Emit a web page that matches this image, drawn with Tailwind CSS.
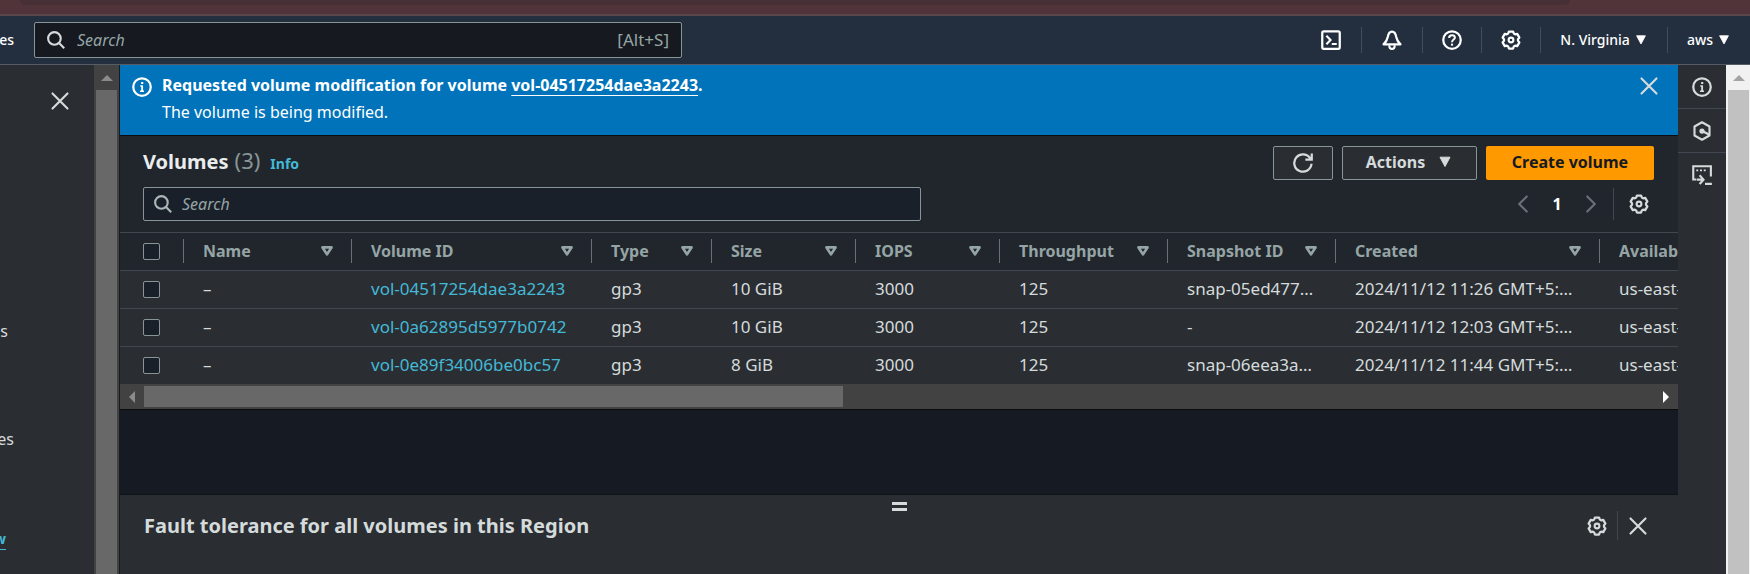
<!DOCTYPE html>
<html lang="en">
<head>
<meta charset="utf-8">
<title>Volumes | EC2</title>
<script src="https://cdn.jsdelivr.net/npm/@tailwindcss/browser@4"></script>
</head>
<body class="bg-[#161a22] text-[#d5dbdb] font-['Noto_Sans','Open_Sans',sans-serif] text-[16px] leading-6">
<svg class="hidden" aria-hidden="true">
  <defs>
    <symbol id="search" viewBox="0 0 16 16"><g fill="none" stroke="currentColor" stroke-width="1.9"><circle cx="6.6" cy="6.6" r="5.6"/><path d="M10.5 10.5 15.3 15.3"/></g></symbol>
    <symbol id="close" viewBox="0 0 16 16"><path d="M2 2l12 12M14 2L2 14" fill="none" stroke="currentColor" stroke-width="1.7" stroke-linecap="round"/></symbol>
    <symbol id="info" viewBox="0 0 16 16"><g fill="none" stroke="currentColor"><circle cx="8" cy="8" r="7" stroke-width="1.8"/><path d="M6.6 7.2H8V11M6.4 11.4h3.2M8.2 7v4.4" stroke-width="1.3"/><path d="M7.3 4.8h1.7" stroke-width="1.6"/></g></symbol>
    <symbol id="gear" viewBox="0 0 16 16"><g fill="none" stroke="currentColor" stroke-linejoin="round"><path stroke-width="1.8" d="M9.7 1.2 10.3 2.9 11.3 3.5 13 3.1 14.7 6.1 13.6 7.4V8.6L14.7 9.9 13 12.9 11.3 12.5 10.3 13.1 9.7 14.8H6.3L5.7 13.1 4.7 12.5 3 12.9 1.3 9.9 2.4 8.6V7.4L1.3 6.1 3 3.1 4.7 3.5 5.7 2.9 6.3 1.2Z"/><circle cx="8" cy="8" r="1.9" stroke-width="1.7"/></g></symbol>
    <symbol id="caret" viewBox="0 0 16 16"><path d="M3 3.2h10L8 12.5Z" fill="currentColor" stroke="currentColor" stroke-width="1" stroke-linejoin="round"/></symbol>
    <symbol id="filter" viewBox="0 0 16 16"><path d="M4 4.8h8L8 11Z" fill="none" stroke="currentColor" stroke-width="2.4" stroke-linejoin="round"/></symbol>
    <symbol id="terminal" viewBox="0 0 16 16"><g fill="none" stroke="currentColor" stroke-width="1.8"><rect x="1" y="1" width="14" height="14" rx="1.2"/><path d="M4.3 4.6 7.6 8 4.3 11.4M8.6 11.2H12.6" stroke-width="1.7"/></g></symbol>
    <symbol id="bell" viewBox="0 0 16 16"><path d="M1.2 11.4C3 9.9 4.1 8.2 4.6 5.6 5 3.2 6 1.2 8 1.2S11 3.2 11.4 5.6C11.9 8.2 13 9.9 14.8 11.4Z" fill="none" stroke="currentColor" stroke-width="1.8" stroke-linejoin="round"/><path d="M5.9 12.2V13a2.1 2.1 0 0 0 4.2 0V12.2" fill="none" stroke="currentColor" stroke-width="1.7"/></symbol>
    <symbol id="help" viewBox="0 0 16 16"><g fill="none" stroke="currentColor"><circle cx="8" cy="8" r="7" stroke-width="1.8"/><path d="M5.7 6.3C5.7 4.9 6.7 4.2 8 4.2S10.3 5 10.3 6.1C10.3 7.6 8 7.7 8 9.7" stroke-width="1.6"/><path d="M8 10.9v1.6" stroke-width="1.7"/></g></symbol>
    <symbol id="hex" viewBox="0 0 16 16"><path d="M8 1 14 4.4V11.6L8 15 2 11.6V4.4Z" fill="none" stroke="currentColor" stroke-width="1.7" stroke-linejoin="round"/><circle cx="8" cy="8" r="2.1" fill="currentColor"/><path d="M8.5 8.2 14 11" stroke="currentColor" stroke-width="1.8"/></symbol>
    <symbol id="shell" viewBox="0 0 16 16"><g fill="none" stroke="currentColor" stroke-width="1.7"><path d="M3.4 11.6H1V1H15.1V9.2"/><path d="M3.4 4.3H5M6.4 4.3H8M9.4 4.3H11" stroke-width="1.5"/><path d="M3.8 11.7H9M6.1 8.2 9.2 11.7 6.1 15.2M10.4 15.1H15.9"/></g></symbol>
    <symbol id="refresh" viewBox="0 0 16 16"><path d="M14.8 8.6A6.9 6.9 0 1 1 13.9 4.6M15 .4V5.3H9.9" fill="none" stroke="currentColor" stroke-width="1.8"/></symbol>
    <symbol id="left" viewBox="0 0 16 16"><path d="M11 2 5 8l6 6" fill="none" stroke="currentColor" stroke-width="1.7" stroke-linecap="round"/></symbol>
    <symbol id="right" viewBox="0 0 16 16"><path d="M5 2l6 6-6 6" fill="none" stroke="currentColor" stroke-width="1.7" stroke-linecap="round"/></symbol>
  </defs>
</svg>

<div class="flex min-h-screen flex-col overflow-hidden">
  <div class="h-4 border-b-2 border-[#5a474b] bg-[#50343a] pl-5 pr-[180px]" aria-hidden="true">
    <div class="h-[5px] rounded-b-[12px] bg-[#463036]"></div>
  </div>

  <header class="flex items-center justify-between border-b border-[#555c66] bg-[#232f3e] py-[6px] text-[14px] leading-5 font-medium text-white">
    <div class="flex items-center gap-5">
      <a href="#" class="flex w-[14px] justify-end">es</a>
      <label class="flex h-9 w-[648px] items-center gap-3 rounded-[2px] border border-[#879596] bg-[#161920] px-3 text-[16px] font-normal text-[#95a5a6]">
        <svg class="size-[18px] shrink-0 text-[#d5dbdb]"><use href="#search"/></svg>
        <input type="search" aria-label="Search services" placeholder="Search" class="min-w-0 flex-1 bg-transparent outline-none placeholder:text-[#95a5a6] placeholder:italic">
        <span class="text-[17px]">[Alt+S]</span>
      </label>
    </div>
    <nav class="flex items-center divide-x divide-[#414d5c]">
      <button aria-label="CloudShell" class="flex h-[26px] items-center px-5"><svg class="size-5"><use href="#terminal"/></svg></button>
      <button aria-label="Notifications" class="flex h-[26px] items-center px-5"><svg class="size-5"><use href="#bell"/></svg></button>
      <button aria-label="Help" class="flex h-[26px] items-center px-[19px]"><svg class="size-5"><use href="#help"/></svg></button>
      <button aria-label="Settings" class="flex h-[26px] items-center px-[19px]"><svg class="size-5"><use href="#gear"/></svg></button>
      <button class="flex h-[26px] items-center gap-1 px-[19px]">N. Virginia <svg class="size-[14px]"><use href="#caret"/></svg></button>
      <button class="flex h-[26px] items-center gap-1 px-[19px]">aws <svg class="size-[14px]"><use href="#caret"/></svg></button>
    </nav>
  </header>

  <div class="flex flex-1">
    <aside class="flex w-[94px] shrink-0 flex-col bg-[#2a2e33]">
      <button aria-label="Close navigation" class="mt-[26px] ml-[50px] w-5"><svg class="size-5"><use href="#close"/></svg></button>
      <a href="#" class="mt-[208px] flex w-2 justify-end">s</a>
      <a href="#" class="mt-[84px] flex w-[14px] justify-end">es</a>
      <a href="#" class="mt-[78px] flex w-[6px] justify-end border-b border-dashed border-[#44b9d6] text-[14px] leading-5 font-bold text-[#44b9d6]">w</a>
    </aside>
    <div class="flex w-[25px] shrink-0 flex-col bg-[#424242] px-[2px]" aria-hidden="true">
      <div class="flex h-[25px] items-center justify-center"><svg class="h-[6px] w-3" viewBox="0 0 12 6"><path d="M6 0 12 6H0Z" fill="#8b8b8b"/></svg></div>
      <div class="flex-1 bg-[#686868]"></div>
    </div>

    <main class="flex min-w-0 flex-1 flex-col border-l border-[#16191f]">
      <section class="flex items-start gap-[10px] bg-[#0073bb] px-3 pt-[7px] pb-[9px] text-white">
        <svg class="mt-[5px] size-5 shrink-0"><use href="#info"/></svg>
        <div class="flex-1 leading-[27px]">
          <p class="font-bold">Requested volume modification for volume <a href="#" class="underline underline-offset-4">vol-04517254dae3a2243</a>.</p>
          <p>The volume is being modified.</p>
        </div>
        <button aria-label="Dismiss" class="mt-1 mr-[7px] text-[#d5dbdb]"><svg class="size-5"><use href="#close"/></svg></button>
      </section>

      <section class="border-y border-y-[#0b0d10] bg-[#21252c]">
        <div class="pt-[10px] pr-6 pb-[11px] pl-[23px]">
          <div class="flex items-center justify-between">
            <h1 class="flex items-baseline gap-[6px] pb-[2px] text-[20px] leading-7 font-bold text-[#eaeded]">Volumes <span class="text-[22px] font-normal text-[#879596]">(3)</span> <a href="#" class="ml-1 text-[14px] text-[#44b9d6]">Info</a></h1>
            <div class="flex gap-[9px] font-bold">
              <button aria-label="Refresh" class="flex h-[34px] w-[60px] items-center justify-center rounded-[2px] border border-[#879596] bg-[#2a2e33]"><svg class="size-5"><use href="#refresh"/></svg></button>
              <button class="flex h-[34px] w-[135px] items-center justify-center gap-3 rounded-[2px] border border-[#879596] bg-[#2a2e33] pb-[2px]">Actions <svg class="size-4"><use href="#caret"/></svg></button>
              <button class="h-[34px] w-[168px] rounded-[2px] bg-[#ff9900] pb-[2px] text-[#16191f]">Create volume</button>
            </div>
          </div>
          <div class="mt-[7px] flex items-center justify-between">
            <label class="flex h-[34px] w-[778px] items-center gap-[10px] rounded-[2px] border border-[#879596] bg-[#1a2029] px-[10px]">
              <svg class="size-[18px] shrink-0 text-[#aab7b8]"><use href="#search"/></svg>
              <input type="search" aria-label="Search volumes" placeholder="Search" class="min-w-0 flex-1 bg-transparent outline-none placeholder:text-[#95a5a6] placeholder:italic">
            </label>
            <div class="flex items-center">
              <button aria-label="Previous page" class="text-[#687078]"><svg class="size-5"><use href="#left"/></svg></button>
              <button class="w-12 font-bold text-white">1</button>
              <button aria-label="Next page" class="text-[#687078]"><svg class="size-5"><use href="#right"/></svg></button>
              <span class="ml-3 h-8 border-l border-[#414750]"></span>
              <button aria-label="Preferences" class="mr-[5px] ml-[15px]"><svg class="size-5"><use href="#gear"/></svg></button>
            </div>
          </div>
        </div>

        <div class="overflow-hidden border-t border-[#414750]">
          <table class="w-[1680px] table-fixed border-collapse text-left whitespace-nowrap">
            <colgroup><col class="w-[63px]"><col class="w-[168px]"><col class="w-[240px]"><col class="w-[120px]"><col class="w-[144px]"><col class="w-[144px]"><col class="w-[168px]"><col class="w-[168px]"><col class="w-[264px]"><col></colgroup>
            <thead class="text-[#95a5a6]">
              <tr class="h-[37px] border-b border-[#414750]">
                <th class="pl-[23px]"><input type="checkbox" aria-label="Select all" class="block size-[17px] appearance-none rounded-[2px] border border-[#879596] bg-[#1a2029]"></th>
                <th><div class="flex h-6 items-center justify-between border-l border-[#687078] pr-[15px] pl-[19px]">Name<svg class="size-[18px]"><use href="#filter"/></svg></div></th>
                <th><div class="flex h-6 items-center justify-between border-l border-[#687078] pr-[15px] pl-[19px]">Volume ID<svg class="size-[18px]"><use href="#filter"/></svg></div></th>
                <th><div class="flex h-6 items-center justify-between border-l border-[#687078] pr-[15px] pl-[19px]">Type<svg class="size-[18px]"><use href="#filter"/></svg></div></th>
                <th><div class="flex h-6 items-center justify-between border-l border-[#687078] pr-[15px] pl-[19px]">Size<svg class="size-[18px]"><use href="#filter"/></svg></div></th>
                <th><div class="flex h-6 items-center justify-between border-l border-[#687078] pr-[15px] pl-[19px]">IOPS<svg class="size-[18px]"><use href="#filter"/></svg></div></th>
                <th><div class="flex h-6 items-center justify-between border-l border-[#687078] pr-[15px] pl-[19px]">Throughput<svg class="size-[18px]"><use href="#filter"/></svg></div></th>
                <th><div class="flex h-6 items-center justify-between border-l border-[#687078] pr-[15px] pl-[19px]">Snapshot ID<svg class="size-[18px]"><use href="#filter"/></svg></div></th>
                <th><div class="flex h-6 items-center justify-between border-l border-[#687078] pr-[15px] pl-[19px]">Created<svg class="size-[18px]"><use href="#filter"/></svg></div></th>
                <th><div class="flex h-6 items-center border-l border-[#687078] pl-[19px]">Availability Zone</div></th>
              </tr>
            </thead>
            <tbody class="divide-y divide-[#414750] bg-[#2a2e33] text-[17px]">
              <tr class="h-[38px]">
                <td class="pl-[23px]"><input type="checkbox" aria-label="Select vol-04517254dae3a2243" class="block size-[17px] appearance-none rounded-[2px] border border-[#879596] bg-[#1a2029]"></td>
                <td class="pl-5">–</td><td class="pl-5"><a href="#" class="text-[#44b9d6]">vol-04517254dae3a2243</a></td><td class="pl-5">gp3</td><td class="pl-5">10 GiB</td><td class="pl-5">3000</td><td class="pl-5">125</td><td class="pl-5">snap-05ed477…</td><td class="pl-5">2024/11/12 11:26 GMT+5:…</td><td class="pl-5">us-east-1a</td>
              </tr>
              <tr class="h-[38px]">
                <td class="pl-[23px]"><input type="checkbox" aria-label="Select vol-0a62895d5977b0742" class="block size-[17px] appearance-none rounded-[2px] border border-[#879596] bg-[#1a2029]"></td>
                <td class="pl-5">–</td><td class="pl-5"><a href="#" class="text-[#44b9d6]">vol-0a62895d5977b0742</a></td><td class="pl-5">gp3</td><td class="pl-5">10 GiB</td><td class="pl-5">3000</td><td class="pl-5">125</td><td class="pl-5">-</td><td class="pl-5">2024/11/12 12:03 GMT+5:…</td><td class="pl-5">us-east-1a</td>
              </tr>
              <tr class="h-[38px]">
                <td class="pl-[23px]"><input type="checkbox" aria-label="Select vol-0e89f34006be0bc57" class="block size-[17px] appearance-none rounded-[2px] border border-[#879596] bg-[#1a2029]"></td>
                <td class="pl-5">–</td><td class="pl-5"><a href="#" class="text-[#44b9d6]">vol-0e89f34006be0bc57</a></td><td class="pl-5">gp3</td><td class="pl-5">8 GiB</td><td class="pl-5">3000</td><td class="pl-5">125</td><td class="pl-5">snap-06eea3a…</td><td class="pl-5">2024/11/12 11:44 GMT+5:…</td><td class="pl-5">us-east-1a</td>
              </tr>
            </tbody>
          </table>
        </div>
        <div class="flex h-[25px] items-center bg-[#424242]" aria-hidden="true">
          <span class="flex w-6 justify-center"><svg class="h-3 w-[6px]" viewBox="0 0 6 12"><path d="M6 0V12L0 6Z" fill="#8b8b8b"/></svg></span>
          <span class="flex h-[21px] flex-1"><span class="w-[46.3%] bg-[#686868]"></span></span>
          <span class="flex w-6 justify-center"><svg class="h-3 w-[6px]" viewBox="0 0 6 12"><path d="M0 0 6 6 0 12Z" fill="#fff"/></svg></span>
        </div>
      </section>

      <div class="flex-1"></div>

      <section class="border-t border-[#0f1216] bg-[#2a2e33] px-6 pb-[34px]">
        <button aria-label="Resize panel" class="mx-auto mt-[7px] flex h-[9px] w-[15px] flex-col justify-between"><span class="h-[3px] w-full bg-[#d5dbdb]"></span><span class="h-[3px] w-full bg-[#d5dbdb]"></span></button>
        <div class="flex items-center justify-between">
          <h2 class="text-[20px] leading-7 font-bold">Fault tolerance for all volumes in this Region</h2>
          <div class="flex items-center pr-[6px]">
            <button aria-label="Panel preferences"><svg class="size-5"><use href="#gear"/></svg></button>
            <span class="mx-[10px] h-[29px] border-l border-[#414750]"></span>
            <button aria-label="Close panel"><svg class="size-5"><use href="#close"/></svg></button>
          </div>
        </div>
      </section>
    </main>

    <aside class="flex w-12 shrink-0 flex-col divide-y divide-[#414750] bg-[#2a2e33]">
      <button aria-label="Info panel" class="flex h-11 items-center justify-center"><svg class="size-5"><use href="#info"/></svg></button>
      <button aria-label="Tutorials" class="flex h-11 items-center justify-center"><svg class="size-5"><use href="#hex"/></svg></button>
      <button aria-label="Console-to-code" class="flex h-11 items-center justify-center"><svg class="size-5"><use href="#shell"/></svg></button>
    </aside>
    <div class="flex w-6 shrink-0 flex-col bg-[#f1f1f1] pr-px pl-[2px]" aria-hidden="true">
      <div class="flex h-[25px] items-center justify-center"><svg class="h-[6px] w-3" viewBox="0 0 12 6"><path d="M6 0 12 6H0Z" fill="#a3a3a3"/></svg></div>
      <div class="flex-1 bg-[#c1c1c1]"></div>
    </div>
  </div>
</div>
</body>
</html>
